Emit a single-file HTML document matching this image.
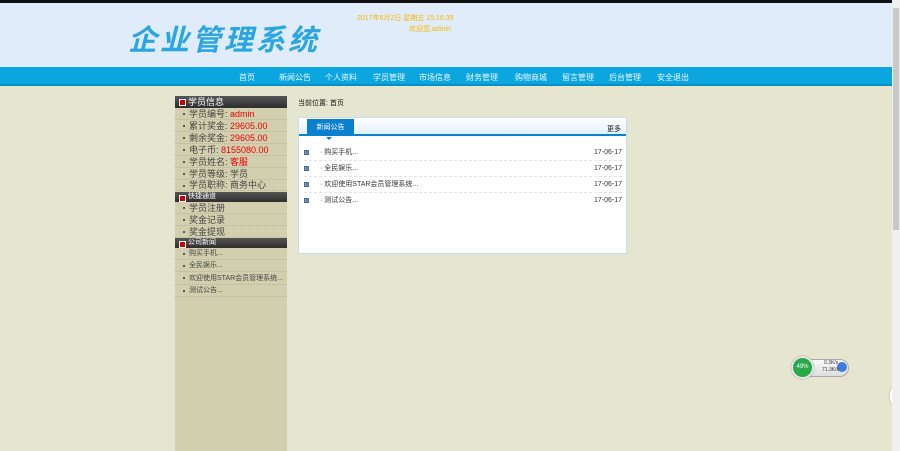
<!DOCTYPE html><html><head><meta charset="utf-8"><style>
*{margin:0;padding:0;box-sizing:border-box}
body{width:900px;height:451px;overflow:hidden;background:#e6e5d0;font-family:"Liberation Sans","Noto Sans CJK SC",sans-serif;font-size:8px;color:#222;position:relative}
.a{position:absolute;white-space:nowrap}
#top{left:0;top:0;width:892px;height:3px;background:#111}
#hd{left:0;top:3px;width:892px;height:64px;background:#e0ecf9}
#nav{left:0;top:67px;width:892px;height:19px;background:#0ba6df;border-bottom:2px solid #0990c2}
.n{color:#eef8ff;font-size:8px;top:72px}
#sb{left:892px;top:0;width:8px;height:451px;background:#f0f0f0}
#th{left:893px;top:8px;width:6px;height:222px;background:#c8c8c8}
#side{left:175px;top:96px;width:112px;height:355px;background:#d2cfae}
.sh{position:absolute;left:175px;width:112px;background:linear-gradient(#555,#2e2e2e);color:#fff;font-size:8px;padding-left:13px}
.sh:before{content:"";position:absolute;left:4px;top:3px;width:5px;height:5px;background:#c00;border:1px solid #fff}
.r{position:absolute;left:175px;width:112px;border-bottom:1px dotted #b8b59a;padding-left:14px;color:#444}
.r:before{content:"";position:absolute;left:8px;top:45%;width:2px;height:2px;background:#555}
.red{color:#e00}
#box{left:298px;top:117px;width:329px;height:137px;background:#fff;border:1px solid #c9ddef}
.it{position:absolute;left:5px;width:318px;height:16px;line-height:16px;border-bottom:1px dashed #e2e2e2;font-size:7px;color:#333}
.it i{position:absolute;left:0;top:5px;width:5px;height:5px;background:#6e8fb5;border:1px solid #4a6c94}
.it span{position:absolute;left:16px;top:0}
.it b{position:absolute;right:0;top:0;font-weight:normal}
</style></head><body>
<div class="a" id="top"></div>
<div class="a" id="hd"></div>
<div class="a" style="left:128px;top:17px;font-family:'Noto Sans CJK SC',sans-serif;font-weight:bold;font-size:29px;color:#2aa6e2;letter-spacing:3px;font-style:italic">企业管理系统</div>
<div class="a" style="left:357px;top:13px;color:#f5b800;font-size:7px">2017年6月2日 星期五 15:16:39</div>
<div class="a" style="left:409px;top:24px;color:#f5b800;font-size:7px">欢迎您,admin</div>
<div class="a" id="nav"></div>
<div class="a n" style="left:239px">首页</div>
<div class="a n" style="left:279px">新闻公告</div>
<div class="a n" style="left:325px">个人资料</div>
<div class="a n" style="left:373px">学员管理</div>
<div class="a n" style="left:419px">市场信息</div>
<div class="a n" style="left:466px">财务管理</div>
<div class="a n" style="left:515px">购物商城</div>
<div class="a n" style="left:562px">留言管理</div>
<div class="a n" style="left:609px">后台管理</div>
<div class="a n" style="left:657px">安全退出</div>
<div class="a" id="side"></div>
<div class="sh" style="top:96px;height:12px;line-height:12px;font-size:9px">学员信息</div>
<div class="r" style="top:108px;height:12px;line-height:12px;font-size:9px">学员编号: <span class="red">admin</span></div>
<div class="r" style="top:120px;height:12px;line-height:12px;font-size:9px">累计奖金: <span class="red">29605.00</span></div>
<div class="r" style="top:132px;height:12px;line-height:12px;font-size:9px">剩余奖金: <span class="red">29605.00</span></div>
<div class="r" style="top:144px;height:12px;line-height:12px;font-size:9px">电子币: <span class="red">8155080.00</span></div>
<div class="r" style="top:156px;height:12px;line-height:12px;font-size:9px">学员姓名: <span class="red">客服</span></div>
<div class="r" style="top:168px;height:12px;line-height:12px;font-size:9px">学员等级: 学员</div>
<div class="r" style="top:180px;height:11px;line-height:11px;font-size:9px">学员职称: 商务中心</div>
<div class="sh" style="top:192px;height:10px;line-height:10px;font-size:7px">快捷通道</div>
<div class="r" style="top:202px;height:12px;line-height:12px;font-size:9px">学员注册</div>
<div class="r" style="top:214px;height:12px;line-height:12px;font-size:9px">奖金记录</div>
<div class="r" style="top:226px;height:12px;line-height:12px;font-size:9px">奖金提现</div>
<div class="sh" style="top:238px;height:10px;line-height:10px;font-size:7px">公司新闻</div>
<div class="r" style="top:248px;height:12px;line-height:12px;font-size:7px">购买手机...</div>
<div class="r" style="top:260px;height:12px;line-height:12px;font-size:7px">全民娱乐...</div>
<div class="r" style="top:272px;height:13px;line-height:13px;font-size:7px">欢迎使用STAR会员管理系统...</div>
<div class="r" style="top:285px;height:12px;line-height:12px;font-size:7px">测试公告...</div>
<div class="a" style="left:298px;top:98px;font-size:7px;color:#111">当前位置: 首页</div>
<div class="a" id="box">
<div style="position:absolute;left:0;top:0;width:327px;height:18px;background:linear-gradient(#fff,#e2f1fb);border-bottom:2px solid #0a80cf"></div>
<div style="position:absolute;left:8px;top:1px;width:47px;height:17px;background:#0a80cf;color:#fff;font-size:7px;text-align:center;line-height:17px">新闻公告</div>
<div style="position:absolute;left:27px;top:19px;width:0;height:0;border:3px solid transparent;border-top:3px solid #0a80cf"></div>
<div style="position:absolute;right:5px;top:6px;font-size:7px;color:#111">更多</div>
<div class="it" style="top:27px"><i></i><span>· 购买手机...</span><b>17-06-17</b></div>
<div class="it" style="top:43px"><i></i><span>· 全民娱乐...</span><b>17-06-17</b></div>
<div class="it" style="top:59px"><i></i><span>· 欢迎使用STAR会员管理系统...</span><b>17-06-17</b></div>
<div class="it" style="top:75px;border:none"><i></i><span>· 测试公告...</span><b>17-06-17</b></div>
</div>
<div class="a" style="left:791px;top:359px;width:58px;height:18px;border-radius:9px;background:linear-gradient(#fafafa,#ddd);border:1px solid #aaa"></div>
<div class="a" style="left:791px;top:356px;width:23px;height:23px;border-radius:50%;background:#2aa84a;border:2px solid #e8e8e8;box-shadow:0 0 1px #555;color:#fff;font-size:6px;text-align:center;line-height:19px">49%</div>
<div class="a" style="left:837px;top:362px;width:10px;height:10px;border-radius:50%;background:#3a7ce0"></div>
<div class="a" style="left:824px;top:360px;font-size:5px;color:#333">0.3K/s</div>
<div class="a" style="left:822px;top:367px;font-size:5px;color:#333">71.3K/s</div>
<div class="a" style="left:890px;top:382px;width:20px;height:28px;border-radius:50%;background:#fff;box-shadow:0 0 2px #aaa"></div>
<div class="a" style="left:893px;top:390px;width:7px;height:10px;background:#f19a3a"></div>
<div class="a" id="sb"></div>
<div class="a" id="th"></div>
</body></html>
